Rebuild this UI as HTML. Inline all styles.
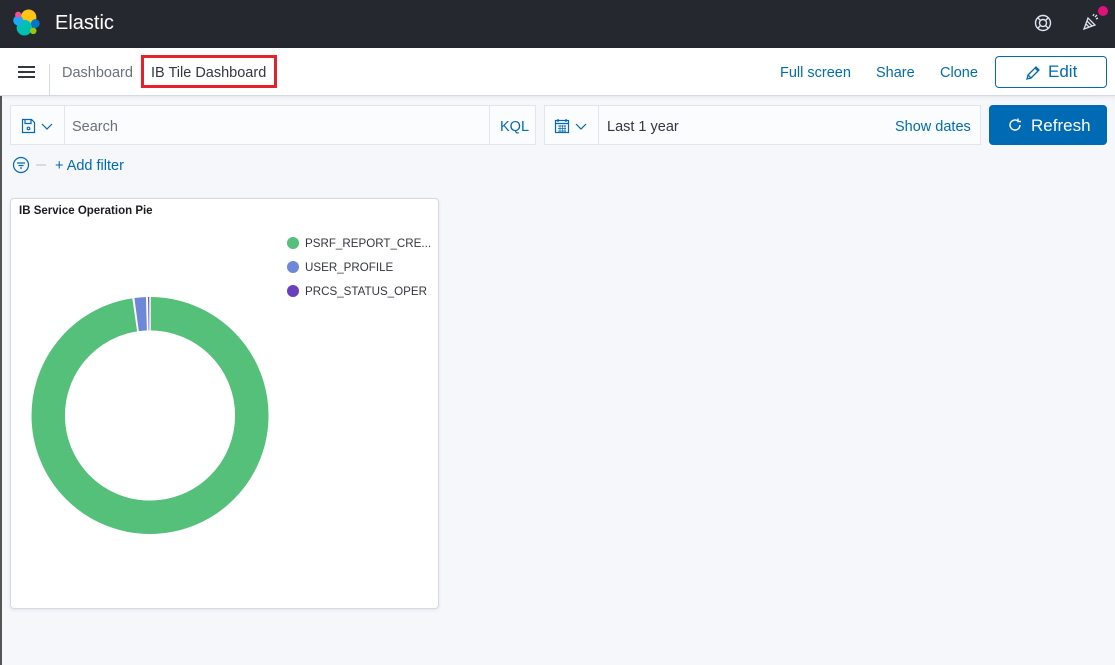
<!DOCTYPE html>
<html><head><meta charset="utf-8"><style>
*{box-sizing:border-box;margin:0;padding:0}
body{width:1115px;height:665px;overflow:hidden;background:#f5f7fa;font-family:"Liberation Sans",sans-serif;position:relative;color:#343741}
.hdr{position:absolute;left:0;top:0;width:1115px;height:48px;background:#25282f}
.nav{position:absolute;left:0;top:48px;width:1115px;height:48px;background:#fff;border-bottom:1px solid #d3dae6;box-shadow:0 1px 3px rgba(0,0,0,.08)}
.a{position:absolute;color:#006bb4;font-size:14.5px}
.box{position:absolute;background:#fbfcfd;border:1px solid #e1e5ec}
</style></head><body>
<div style="position:absolute;left:0;top:48px;width:2px;height:617px;background:#555"></div>
<div class="hdr">
 <svg style="position:absolute;left:13px;top:9px" width="27" height="27" viewBox="0 0 26 26">
  <circle cx="15" cy="8" r="7.5" fill="#fec514"/>
  <circle cx="11" cy="18" r="7.5" fill="#00bfb3"/>
  <circle cx="5" cy="11" r="4.8" fill="#1ba9f5"/>
  <circle cx="5" cy="5.5" r="3" fill="#f04e98"/>
  <circle cx="21.5" cy="14" r="4.2" fill="#0077cc"/>
  <circle cx="19.5" cy="21" r="3.2" fill="#93c90e"/>
 </svg>
 <div style="position:absolute;left:55px;top:12px;color:#fff;font-size:20px">Elastic</div>
 <svg style="position:absolute;left:1034px;top:14px" width="18" height="18" viewBox="0 0 18 18" fill="none" stroke="#dfe5ef" stroke-width="1.4"><circle cx="9" cy="9" r="7.5"/><circle cx="9" cy="9" r="3.5"/><path d="M4 4l2.5 2.5M14 4l-2.5 2.5M4 14l2.5-2.5M14 14l-2.5-2.5"/></svg>
 <svg style="position:absolute;left:1082px;top:13px" width="18" height="18" viewBox="0 0 18 18" fill="none" stroke="#dfe5ef" stroke-width="1.3"><path d="M2 16l4-11 7 7z M5 8l5 5M4 11l3 3"/><path d="M11 3l1-2M14 6l2-1M13 4l2-2"/></svg>
 <div style="position:absolute;left:1098px;top:6px;width:10px;height:10px;border-radius:50%;background:#e0117a"></div>
</div>
<div class="nav">
 <div style="position:absolute;left:18px;top:18px;width:17px;height:2px;background:#343741;box-shadow:0 5px 0 #343741,0 10px 0 #343741"></div>
 <div style="position:absolute;left:49px;top:16px;width:1px;height:32px;background:#d3dae6"></div>
 <div style="position:absolute;left:62px;top:17px;font-size:14.5px;color:#69707d">Dashboard</div>
 <div style="position:absolute;left:141px;top:7px;width:136px;height:33px;border:3px solid #e8202a"></div>
 <div style="position:absolute;left:151px;top:17px;font-size:14.5px;color:#343741">IB Tile Dashboard</div>
 <div class="a" style="left:780px;top:17px">Full screen</div>
 <div class="a" style="left:876px;top:17px">Share</div>
 <div class="a" style="left:940px;top:17px">Clone</div>
 <div style="position:absolute;left:995px;top:8px;width:112px;height:32px;border:1px solid #006bb4;border-radius:4px"></div>
 <svg style="position:absolute;left:1025px;top:17px" width="16" height="16" viewBox="0 0 16 16" fill="none" stroke="#006bb4" stroke-width="1.3"><path d="M2 14l1-4 8-8 3 3-8 8zM10 3l3 3M3 10l3 3"/></svg>
 <div class="a" style="left:1048px;top:14px;font-size:17px">Edit</div>
</div>
<div class="box" style="left:10px;top:105px;width:526px;height:40px">
 <div style="position:absolute;left:53px;top:0;width:1px;height:38px;background:#e1e5ec"></div>
 <svg style="position:absolute;left:10px;top:12px" width="36" height="16" viewBox="0 0 36 16" fill="none" stroke="#006bb4" stroke-width="1.2"><path d="M1.5 1.5h9l3 3v10h-12z M4 1.5v4h6v-4"/><circle cx="7.5" cy="10.5" r="1.3"/><path d="M21 6l5 5 5-5"/></svg>
 <div style="position:absolute;left:61px;top:13px;font-size:14.5px;color:#69707d">Search</div>
 <div style="position:absolute;left:478px;top:0;width:1px;height:38px;background:#e1e5ec"></div>
 <div class="a" style="left:489px;top:13px">KQL</div>
</div>
<div class="box" style="left:544px;top:105px;width:437px;height:40px">
 <div style="position:absolute;left:53px;top:0;width:1px;height:38px;background:#e1e5ec"></div>
 <svg style="position:absolute;left:9px;top:12px" width="36" height="16" viewBox="0 0 36 16" fill="none" stroke="#006bb4" stroke-width="1.2"><rect x="1.5" y="2.5" width="13" height="12"/><path d="M1.5 5.5h13M4 1v3M12 1v3"/><path d="M4 8h8M4 10.5h8M4 13h8M6 7v7M8.5 7v7M11 7v7" stroke-width=".7"/><path d="M22 6l5 5 5-5"/></svg>
 <div style="position:absolute;left:62px;top:13px;font-size:14.5px;color:#343741">Last 1 year</div>
 <div class="a" style="left:350px;top:13px">Show dates</div>
</div>
<div style="position:absolute;left:989px;top:105px;width:118px;height:40px;background:#006bb4;border-radius:4px"></div>
<svg style="position:absolute;left:1007px;top:117px" width="16" height="16" viewBox="0 0 16 16" fill="none" stroke="#fff" stroke-width="1.4"><path d="M13 8a5 5 0 1 1-2-4"/><path d="M11 1.5v3h3"/></svg>
<div style="position:absolute;left:1031px;top:116px;color:#fff;font-size:17px">Refresh</div>
<svg style="position:absolute;left:12px;top:156px" width="36" height="18" viewBox="0 0 36 18" fill="none" stroke="#006bb4" stroke-width="1.2"><circle cx="9" cy="9" r="7.5"/><path d="M5 7h8M6.5 9.5h5M8 12h2"/><path d="M24 9h10" stroke="#c2c7d0"/></svg>
<div class="a" style="left:55px;top:158px">+ Add filter</div>
<div style="position:absolute;left:10px;top:198px;width:429px;height:411px;background:#fff;border:1px solid #d3dae6;border-radius:4px;box-shadow:0 1px 3px rgba(0,0,0,.08)"></div>
<div style="position:absolute;left:19px;top:205px;font-size:11.5px;font-weight:bold;color:#1a1c21">IB Service Operation Pie</div>
<div style="position:absolute;left:287px;top:237px;width:12px;height:12px;border-radius:50%;background:#54c07a"></div>
<div style="position:absolute;left:287px;top:261px;width:12px;height:12px;border-radius:50%;background:#6e87d8"></div>
<div style="position:absolute;left:287px;top:285px;width:12px;height:12px;border-radius:50%;background:#6a3fbe"></div>
<div style="position:absolute;left:305px;top:237px;font-size:11.6px;color:#343741">PSRF_REPORT_CRE...</div>
<div style="position:absolute;left:305px;top:261px;font-size:11.6px;color:#343741">USER_PROFILE</div>
<div style="position:absolute;left:305px;top:285px;font-size:11.6px;color:#343741">PRCS_STATUS_OPER</div>
<svg style="position:absolute;left:0;top:0" width="440" height="600">
 <g transform="rotate(-90 150 415.5)" fill="none" stroke-width="33.5">
  <circle cx="150" cy="415.5" r="101.75" stroke="#54c07a" stroke-dasharray="624.6 20"/>
  <circle cx="150" cy="415.5" r="101.75" stroke="#6e87d8" stroke-dasharray="11 628.3" stroke-dashoffset="-625.6"/>
  <circle cx="150" cy="415.5" r="101.75" stroke="#6a3fbe" stroke-dasharray="1.2 638" stroke-dashoffset="-637.4"/>
 </g>
 <g stroke="#fff" stroke-width="1.5">
  <line x1="150" y1="415.5" x2="150" y2="290"/>
  <line x1="150" y1="415.5" x2="132" y2="290.8"/>
  <line x1="150" y1="415.5" x2="146.5" y2="290"/>
 </g>
 <circle cx="150" cy="415.5" r="85" fill="#fff"/>
</svg>
</body></html>
